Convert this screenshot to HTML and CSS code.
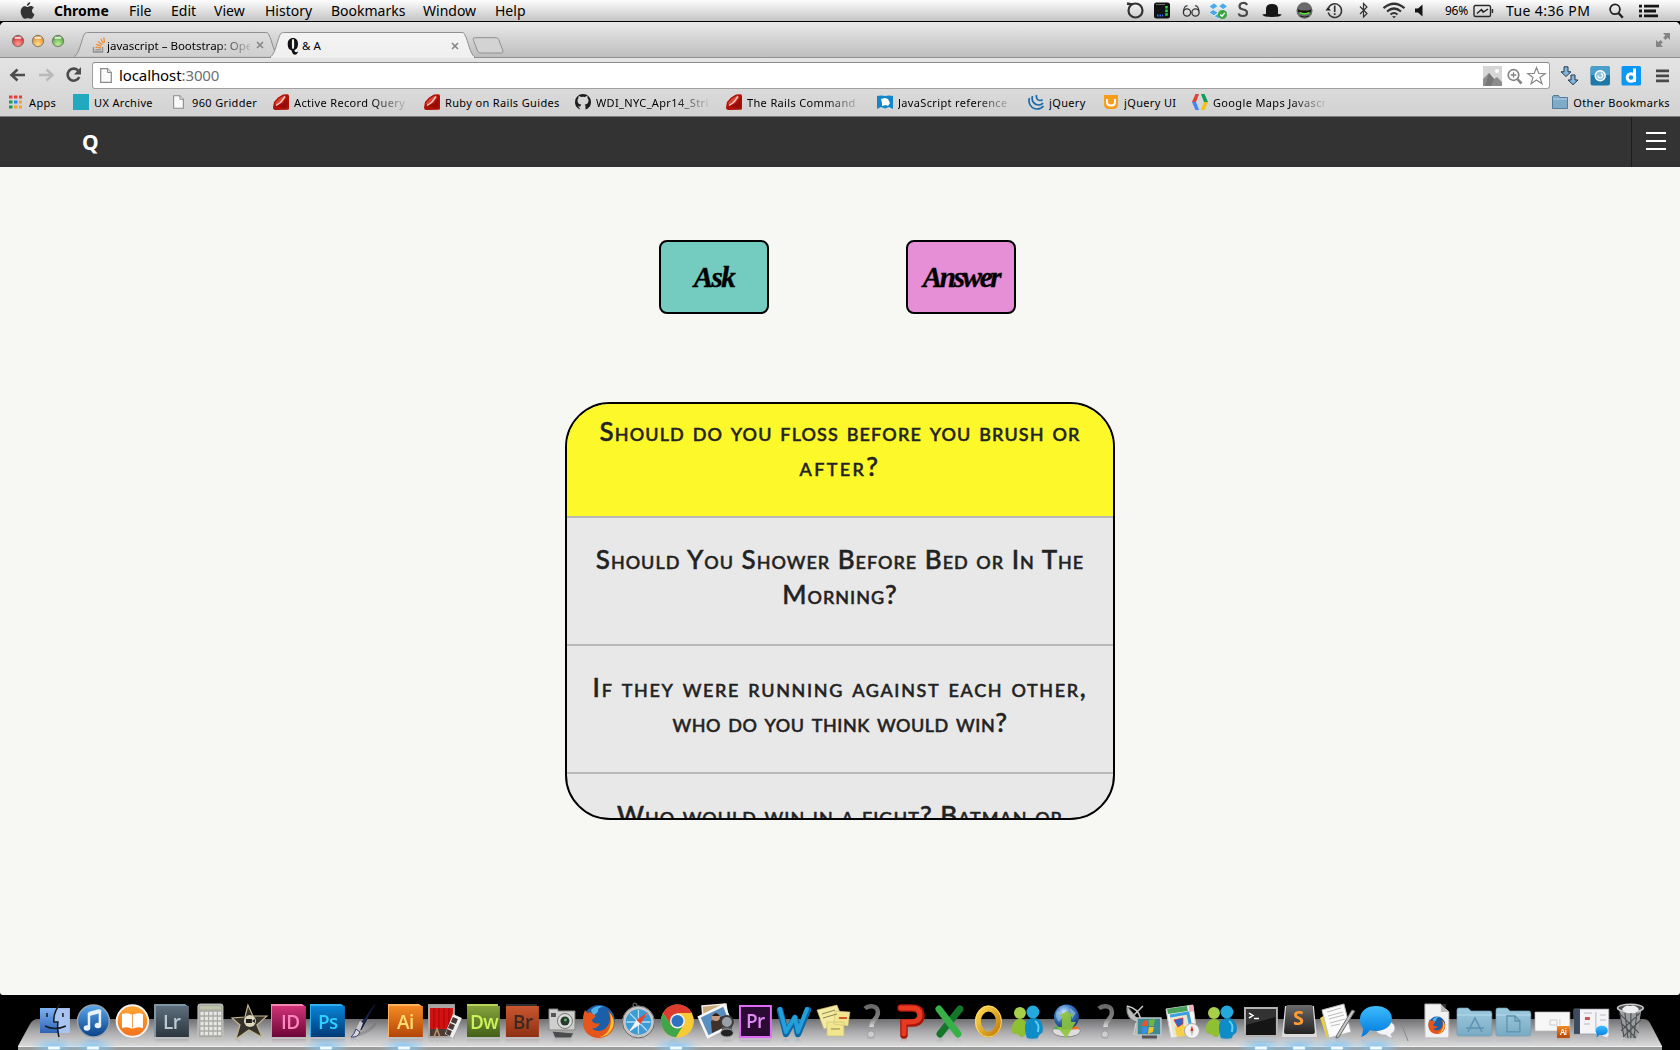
FILE: index.html
```html
<!DOCTYPE html>
<html lang="en">
<head>
<meta charset="utf-8">
<title>Q &amp; A</title>
<link rel="stylesheet" href="styles.css">
</head>
<body>
<svg class="defs" width="0" height="0">
  <defs>
    <linearGradient id="g-blue" x1="0" y1="0" x2="0" y2="1"><stop offset="0" stop-color="#5aa9ee"/><stop offset="1" stop-color="#0a3f86"/></linearGradient>
    <linearGradient id="g-ps" x1="0" y1="0" x2="0" y2="1"><stop offset="0" stop-color="#0a84d6"/><stop offset="1" stop-color="#003a78"/></linearGradient>
    <linearGradient id="g-lr" x1="0" y1="0" x2="0" y2="1"><stop offset="0" stop-color="#5d6e7c"/><stop offset="1" stop-color="#2d363e"/></linearGradient>
    <linearGradient id="g-id" x1="0" y1="0" x2="0" y2="1"><stop offset="0" stop-color="#d03378"/><stop offset="1" stop-color="#6d0537"/></linearGradient>
    <linearGradient id="g-ai" x1="0" y1="0" x2="0" y2="1"><stop offset="0" stop-color="#f58a24"/><stop offset="1" stop-color="#b34608"/></linearGradient>
    <linearGradient id="g-dw" x1="0" y1="0" x2="0" y2="1"><stop offset="0" stop-color="#85a33a"/><stop offset="1" stop-color="#43601a"/></linearGradient>
    <linearGradient id="g-br" x1="0" y1="0" x2="0" y2="1"><stop offset="0" stop-color="#c9572f"/><stop offset="1" stop-color="#8f3013"/></linearGradient>
    <linearGradient id="g-orange" x1="0" y1="0" x2="0" y2="1"><stop offset="0" stop-color="#ffa733"/><stop offset="1" stop-color="#f2711c"/></linearGradient>
    <linearGradient id="g-face" x1="0" y1="0" x2="0" y2="1"><stop offset="0" stop-color="#7db2f2"/><stop offset="1" stop-color="#2e62b4"/></linearGradient>
    <linearGradient id="g-q" x1="0" y1="0" x2="0" y2="1"><stop offset="0" stop-color="#6a6a6a"/><stop offset=".6" stop-color="#808080"/><stop offset="1" stop-color="#dcdcdc"/></linearGradient>
    <linearGradient id="g-folder" x1="0" y1="0" x2="0" y2="1"><stop offset="0" stop-color="#9fcbdf"/><stop offset="1" stop-color="#79aac3"/></linearGradient>
    <linearGradient id="g-msg" x1="0" y1="0" x2="0" y2="1"><stop offset="0" stop-color="#3dbcff"/><stop offset="1" stop-color="#0077da"/></linearGradient>
    <linearGradient id="g-dark" x1="0" y1="0" x2="0" y2="1"><stop offset="0" stop-color="#6b6b6b"/><stop offset="1" stop-color="#222"/></linearGradient>
    <linearGradient id="g-gold" x1="0" y1="0" x2="1" y2="1"><stop offset="0" stop-color="#ffd84f"/><stop offset="1" stop-color="#c17c0a"/></linearGradient>
    <linearGradient id="g-tab" x1="0" y1="0" x2="0" y2="1"><stop offset="0" stop-color="#f4f4f4"/><stop offset="1" stop-color="#efefef"/></linearGradient>
    <linearGradient id="g-tab-off" x1="0" y1="0" x2="0" y2="1"><stop offset="0" stop-color="#dedede"/><stop offset="1" stop-color="#cfcfcf"/></linearGradient>
    <linearGradient id="g-shelf" x1="0" y1="0" x2="0" y2="1"><stop offset="0" stop-color="#707072"/><stop offset=".45" stop-color="#a8a8aa"/><stop offset="1" stop-color="#dadadb"/></linearGradient>
    <radialGradient id="g-red" cx=".5" cy=".75" r=".7"><stop offset="0" stop-color="#ff9d94"/><stop offset="1" stop-color="#c92a2c"/></radialGradient>
    <radialGradient id="g-amber" cx=".5" cy=".75" r=".7"><stop offset="0" stop-color="#ffe08a"/><stop offset="1" stop-color="#d98427"/></radialGradient>
    <radialGradient id="g-green" cx=".5" cy=".75" r=".7"><stop offset="0" stop-color="#c0f09a"/><stop offset="1" stop-color="#4d9a3a"/></radialGradient>
    <radialGradient id="g-globe" cx=".4" cy=".3" r=".8"><stop offset="0" stop-color="#cfe6ff"/><stop offset=".4" stop-color="#3b7cc4"/><stop offset="1" stop-color="#0b2d66"/></radialGradient>
    <radialGradient id="g-lamp"><stop offset="0" stop-color="#7cc4f5" stop-opacity=".9"/><stop offset="1" stop-color="#8ccbf5" stop-opacity="0"/></radialGradient>
  </defs>
  <symbol id="ruby" viewBox="0 0 16 16"><path d="M0 13.500 1 8 5 3.500 10 .5 14.500.3q1.500.2 1.500 2v12q0 1.500-1.500 1.500L2 16q-2-.3-2-2.500z" fill="#b11208"/><path d="M2 9 6 4.500 11.500 1.500 13 3 9.500 8.500 3 11z" fill="#dc4638"/><path d="M3 11.500 7.500 8.500 12 2.500" stroke="#f9d0ca" stroke-width="1.300" fill="none"/><path d="M4.500 12 10.500 9.500 14.500 4v9l-3 1.500z" fill="#960d05"/></symbol>
  <symbol id="page" viewBox="0 0 12 15"><path d="M.7.7h6.800l3.800 3.800v9.800H.7z" fill="#fafafa" stroke="#8a8a8a" stroke-width="1.200"/><path d="M7.500.7v3.800h3.800" fill="#e4e4e4" stroke="#8a8a8a" stroke-width="1"/></symbol>
  <symbol id="close" viewBox="0 0 8 8"><path d="M1 1l6 6M7 1 1 7" stroke="#858585" stroke-width="1.600"/></symbol>
  <symbol id="missing" viewBox="0 0 39 40"><path d="M13 7.500C17 3.500 26 4.500 26 11.500c0 7-6.500 6-6.500 14.500" fill="none" stroke="url(#g-q)" stroke-width="4.500"/><circle cx="19" cy="33.500" r="3.600" fill="#ccc" stroke="#999"/></symbol>
  <symbol id="buddies" viewBox="0 0 39 40"><circle cx="12" cy="12" r="6" fill="#a9d04a"/><path d="M4 29c0-7 3-11 8-11s7 4 7 9c-1 8-3 9-6 9-3-2-3-4-6-3-2 0-3-2-3-4z" fill="#8fc032"/><circle cx="25" cy="11" r="6.500" fill="#25a8dc"/><path d="M17 27c0-7 4-10 9-10s9 4 9 11c0 6-4 4-5 9-4 1-7 1-11 0-1-3-2-6-2-10z" fill="#0e8cc7"/><path d="M27 20q5 3 3 11" stroke="#5fd0f4" fill="none" stroke-width="2"/></symbol>
  <symbol id="firefox" viewBox="0 0 34 34"><circle cx="17" cy="17" r="16" fill="#1b5fa8"/><path d="M9 6q6-6 13-3-7 0-6 5l-5 4z" fill="#4fb2e8"/><path d="M3 6c1 1 2 3 3 3 2-1 4 0 5 1l3 2-4 4c1 4 5 4 8 3-1 4-5 6-8 5 3 4 10 4 14 0 5-5 5-11 2-17 5 3 8 10 6 16-2 7-8 11-15 11C7 34 1 27 1 19c0-5 0-8 2-13z" fill="#e4561b"/><path d="M28 9c4 5 5 11 2 16-3 6-8 8-12 8 9-3 13-12 10-24z" fill="#ffc52e"/></symbol>
  <symbol id="bubble" viewBox="0 0 39 40"><path d="M24 19c8 0 13 4 13 8 0 3-2 5-4 6 0 1 1 3 2 4-3 0-5-1-7-3-6 0-9-2-10-5z" fill="#f2f4f8" stroke="#aab" stroke-width=".5"/><path d="M18 5c9 0 16 5 16 12.500S27 30 18 30q-3 0-6-1-3 5-9 7 2-3 2-9c-2-2-3-5-3-9C2 10 9 5 18 5z" fill="url(#g-msg)"/></symbol>
  <symbol id="lamp" viewBox="0 0 50 14"><ellipse cx="25" cy="11" rx="24" ry="11" fill="url(#g-lamp)"/><rect x="19" y="10.500" width="12" height="3" rx="1" fill="#f4fbff"/></symbol>
</svg>

<header class="menubar">
  <svg class="apple" viewBox="0 0 15 19"><path d="M10.300 0c.2 2-1.500 4-3.400 4C6.700 2.200 8.300.4 10.300 0zM7.500 5.200c.8 0 1.700-.9 3.400-.9 1.300 0 2.600.7 3.300 1.800-2.900 1.600-2.400 5.600.6 6.700C14.200 15 12.500 17.800 11 17.800c-1.200 0-1.600-.7-3.100-.7-1.500 0-2 .7-3.100.7C2.900 17.800.3 13.600.3 10.300.3 6.500 2.600 4.400 4.800 4.400c1.200 0 2.100.8 2.700.8z" fill="#333"/></svg>
  <nav class="menus">
    <b>Chrome</b><span>File</span><span>Edit</span><span>View</span><span>History</span><span>Bookmarks</span><span>Window</span><span>Help</span>
  </nav>
  <svg class="status" viewBox="1120 0 310 21" width="310" height="21">
    <g fill="none" stroke="#333" stroke-width="1.800">
      <circle cx="1135.500" cy="10.500" r="7" stroke-width="2.200"/><path d="M1127 3.500 1132 4.500" stroke-width="2.500"/>
      <circle cx="1187" cy="12.500" r="3.600" stroke-width="1.300"/><circle cx="1195.500" cy="12.500" r="3.600" stroke-width="1.300"/><path d="M1183.500 11q1-6 4-5M1199 11q-1-6-4-5" stroke-width="1.200"/>
      <path d="M1247 5q-1-2.500-4.500-2-3 .5-3 3.300 0 2.700 3.800 3.200t3.700 3.200q0 3.300-4.500 3.300-3.500 0-3.700-2.500" stroke="#4a4a4a" stroke-width="2.200"/>
      <path d="M1328.500 8a6.800 6.800 0 1 1-.3 4.500" stroke-width="1.500"/><path d="M1334.700 5.500v6.500" stroke-width="1.700"/><path d="M1334.700 13.200v1.800" stroke-width="1.700"/><path d="M1325.500 10.500h5.500l-3-3.500z" fill="#222" stroke="none"/>
      <path d="M1360 6.500l7 7-3.500 3.500V3.500l3.500 3.500-7 7" stroke-width="1.200"/>
      <path d="M1383.500 8.200q10.500-9 21 0" stroke-width="2.300"/><path d="M1387 11.500q7-6 14 0" stroke-width="2.200"/><path d="M1390.500 14.500q3.500-3 7 0" stroke-width="2"/>
    </g>
    <path d="M1392 16.200h4l-2 2z" fill="#222"/>
    <rect x="1154" y="2.500" width="16" height="16" rx="2.500" fill="#101214"/><path d="M1166.500 6v2.600m0 1v2.600m0 1v2.600" stroke="#27d64e" stroke-width="2.500"/><path d="M1157 15.500h6" stroke="#2a6ff0" stroke-width="2" stroke-dasharray="1.500 1"/><path d="M1156 4.500h9" stroke="#666"/>
    <g fill="#4aa9ea" stroke="#fff" stroke-width=".6"><path d="M1209 6.500l5-3.500 4 3.200-4.800 3.300zM1218.700 6.200l4.300-3.200 4.500 3.500-4.200 3zM1209 12.500l4.200-3 5 3.200-4.200 3.200zM1218.500 12.700l4.800-3.200 4.200 3-4.500 3.200zM1213.500 16.200l5-3 4.500 3-4.500 2.500z"/></g><circle cx="1222.500" cy="14.500" r="4.500" fill="#3aa53c"/><path d="M1220.300 14.500l1.700 1.700 2.800-3.300" stroke="#fff" stroke-width="1.300" fill="none"/>
    <path d="M1266 14V9q0-5 6-5t6 5v5l3.800.5q-1 2.500-9.800 2.500t-9.800-2.500z" fill="#161616"/>
    <ellipse cx="1304.500" cy="10.500" rx="8" ry="8.300" fill="#6a6a6a"/><path d="M1297.500 9q3 2 5.500 1.500h3q3 .5 5.500-1.500l-1 3.500q-5.500 3-12 0z" fill="#111"/><path d="M1299.500 12.500q5 2.500 10 0" stroke="#5be33e" stroke-width="1.400" fill="none"/><path d="M1300 16q4.500 2 9 0" stroke="#222" fill="none"/>
    <path d="M1415 8.500h3l4.500-4v12l-4.500-4h-3z" fill="#151515"/>
  </svg>
  <span class="percent">96%</span>
  <svg class="battery" viewBox="0 0 21 14" width="21" height="14"><path d="M4 1.500H2.500q-1.500 0-1.500 1.500v8q0 1.500 1.500 1.500H16q1.500 0 1.500-1.500V3q0-1.500-1.500-1.500H4M19.500 5v4" fill="none" stroke="#2a2a2a" stroke-width="1.400"/><path d="M4 9.500 8.500 5.500 10.500 8 15 5M10.500 8.500 8.500 6" fill="none" stroke="#222" stroke-width="1.500"/></svg>
  <span class="clock">Tue 4:36 PM</span>
  <svg class="search" viewBox="0 0 15 16" width="15" height="16"><circle cx="6" cy="6.300" r="4.900" fill="none" stroke="#222" stroke-width="1.800"/><path d="M9.500 10l4.300 4.700" stroke="#222" stroke-width="2.400"/></svg>
  <svg class="list" viewBox="0 0 20 14" width="20" height="14"><path d="M0 2.200h3M0 7h3M0 11.800h3M5 2.200h15M5 7h12M5 11.800h14" stroke="#151515" stroke-width="2.800"/></svg>
</header>

<section class="chrome">
  <div class="tabstrip">
    <svg class="lights" viewBox="0 0 54 14" width="54" height="14"><g stroke="#555" stroke-opacity=".6"><circle cx="7" cy="7" r="5.700" fill="url(#g-red)"/><circle cx="27" cy="7" r="5.700" fill="url(#g-amber)"/><circle cx="47" cy="7" r="5.700" fill="url(#g-green)"/></g><path d="M4.500 3.800h5M24.500 3.800h5M44.500 3.800h5" stroke="#fff" stroke-opacity=".8" stroke-width="2" stroke-linecap="round"/></svg>
    <div class="tab">
      <svg class="tab-shape" viewBox="0 0 205 25" width="205" height="25"><path d="M0 24.500C5 24 8 5 10.500 2 11.500.5 13 .5 15 .5h175c3 0 4 0 5 2.500C198 8 200 23 205 24.500" fill="url(#g-tab-off)" stroke="#8f8f8f"/></svg>
      <svg class="fav" viewBox="0 0 14 16" width="14" height="16"><path d="M1.500 10v5h9v-5" fill="none" stroke="#8d8f91" stroke-width="1.400"/><path d="M3.300 12.800h5.500" stroke="#8d8f91" stroke-width="1.300"/><path d="M3.500 10.200l5.400.8M4.200 7.300l5 1.800M6 4.500l4.200 3.200M8.800 2l2.700 4.500M11.800.5l.8 5" stroke="#f08b35" stroke-width="1.300"/></svg>
      <span class="tab-title fade">javascript – Bootstrap: Ope</span>
      <svg class="x" width="8" height="8"><use href="#close"/></svg>
    </div>
    <div class="tab active">
      <svg class="tab-shape" viewBox="0 0 205 26" width="205" height="26"><path d="M0 25C5 24 8 5 10.500 2 11.500.5 13 .5 15 .5h175c3 0 4 0 5 2.500C198 8 200 23 205 25" fill="url(#g-tab)" stroke="#8f8f8f"/><path d="M1 25.500h203" stroke="#efefef" stroke-width="2"/></svg>
      <svg class="fav q" viewBox="0 0 12 17" width="12" height="17"><path fill-rule="evenodd" d="M6 0c3.300 0 5 2.500 5 6s-1.500 5.500-3.500 6c0 2 1 2.800 3.500 1.600-.2 2-1.500 3.200-3 3.200-2.500 0-2.500-2.300-3.800-4.700C1.800 11.500.7 9.500.7 6 .7 2.500 2.700 0 6 0zm0 1C4.800 1 4.900 3 4.900 6s0 5 1.100 5 1.200-2 1.200-5S7.200 1 6 1z" fill="#111"/></svg>
      <span class="tab-title">&amp; A</span>
      <svg class="x" width="8" height="8"><use href="#close"/></svg>
    </div>
    <svg class="newtab" viewBox="0 0 32 17" width="32" height="17"><path d="M3 .7h20c3 0 3.500 1 4.200 3l3.500 9.500c.6 2 .2 2.800-2 2.800H9c-2.500 0-3-.8-3.800-3L1.500 3.500C.8 1.500 1 .7 3 .7z" fill="#d3d3d3" stroke="#8f8f8f"/></svg>
    <svg class="expand" viewBox="0 0 14 14" width="14" height="14"><path d="M7 0h7v7l-2.300-2.300-2.200 2.200-2.300-2.300 2.200-2.200zM0 7l2.300 2.300L4.500 7l2.300 2.300-2.200 2.200L7 14H0z" fill="#858585"/></svg>
  </div>
  <div class="toolbar">
    <svg class="nav-icons" viewBox="0 0 74 20" width="74" height="20"><path d="M17 10H4M9.500 4.500 3.500 10l6 5.500" fill="none" stroke="#4c4c4c" stroke-width="2.600"/><path d="M31 10h13M38.500 4.500l6 5.500-6 5.500" fill="none" stroke="#b9b9b9" stroke-width="2.400"/><path d="M70 5.500a6 6 0 1 0 1.200 6.500" fill="none" stroke="#4c4c4c" stroke-width="2.600"/><path d="M73 2v7.500h-7z" fill="#4c4c4c"/></svg>
    <div class="omnibox">
      <svg class="doc" width="12" height="15"><use href="#page"/></svg>
      <span class="url">localhost<i>:3000</i></span>
      <svg class="omni-icons" viewBox="0 0 64 20" width="64" height="20"><path d="M0 0h19v20H0z" fill="#d6d6d6"/><circle cx="14" cy="5" r="2" fill="#fff"/><path d="M0 20v-7l6-6 5 6 3-2 5 5v4z" fill="#8c8c8c"/><path d="M6 7l5 6-3 7H2z" fill="#777"/><circle cx="30.500" cy="9" r="5.300" fill="none" stroke="#858585" stroke-width="1.700"/><path d="M34.500 13.200l4 4.300" stroke="#858585" stroke-width="2.600"/><path d="M27.700 9h5.600M30.500 6.200v5.600" stroke="#858585" stroke-width="1.300"/><path d="M53.500 1.500l2.300 6h6.400l-5.200 4 2 6.300-5.500-3.800-5.500 3.800 2-6.300-5.200-4h6.400z" fill="#fff" stroke="#888" stroke-width="1.200"/></svg>
    </div>
    <svg class="ext" viewBox="0 0 110 20" width="110" height="20"><path d="M4 .8h4v5h3L6 10.500 1 5.800h3zM11 9h4v5h3l-5 4.700L8 14h3z" fill="#86b6da" stroke="#203a52"/><rect x="30.500" y="0" width="19.500" height="19.500" rx="2.500" fill="#1e79a8"/><path d="M30.500 2.500Q30.500 0 33 0h14.500q2.500 0 2.500 2.500V9H30.500z" fill="#4ba0cb"/><circle cx="40.200" cy="9.800" r="5" fill="#8fc4de" stroke="#fff" stroke-width="1.400"/><path d="M38 9.500a2.300 2.300 0 1 0 3-2" fill="none" stroke="#fff" stroke-width="1.200"/><rect x="61.500" y="0" width="19.500" height="19.500" rx="1.500" fill="#0b97f5"/><circle cx="71" cy="11.500" r="3.800" fill="none" stroke="#fff" stroke-width="3"/><path d="M74.500 2.500v13.500" stroke="#fff" stroke-width="3"/><path d="M96 4.800h13M96 9.800h13M96 14.800h13" stroke="#484848" stroke-width="2.800"/></svg>
  </div>
  <div class="bookmarks">
    <a class="bm w-apps"><svg viewBox="0 0 16 16"><path d="M1 3h13" stroke="#e33e3c" stroke-width="3" stroke-dasharray="3.500 1.500"/><path d="M1 8h3.500" stroke="#169b5b" stroke-width="3"/><path d="M6 8h3.500" stroke="#2f86e8" stroke-width="3"/><path d="M11 8h3M6 13h3.500M11 13h3" stroke="#f2a22d" stroke-width="3"/><path d="M1 13h3.500" stroke="#169b5b" stroke-width="3"/></svg><span>Apps</span></a>
    <a class="bm w-ux"><svg viewBox="0 0 16 16"><path d="M0 0h16v16H0z" fill="#21a9bf"/></svg><span>UX Archive</span></a>
    <a class="bm w-grid"><svg viewBox="0 0 16 16"><use href="#page" x="2" y="1" width="11" height="14"/></svg><span>960 Gridder</span></a>
    <a class="bm w-std"><svg><use href="#ruby"/></svg><span class="fade">Active Record Query</span></a>
    <a class="bm w-std"><svg><use href="#ruby"/></svg><span>Ruby on Rails Guides</span></a>
    <a class="bm w-std"><svg viewBox="0 0 16 16"><path d="M5.500 15.500v-3q-2.500.5-3.500-1.500M5.500 15.500C2 14.500 0 11.500 0 8a8 8 0 0 1 16 0c0 3.500-2 6.500-5.500 7.500v-3c0-1-.3-1.500-.8-2 2.300-.3 3.800-1.200 3.800-4 0-1-.3-1.800-1-2.500.1-.5.1-1.200-.1-2-.8 0-1.600.4-2.400.9a8 8 0 0 0-4 0C5.200 2.400 4.400 2 3.600 2c-.2.800-.2 1.500-.1 2-.7.700-1 1.500-1 2.500 0 2.800 1.500 3.700 3.800 4-.5.400-.8 1-.8 2z" fill="#1c1c1c"/></svg><span class="fade">WDI_NYC_Apr14_Stri</span></a>
    <a class="bm w-std"><svg><use href="#ruby"/></svg><span class="fade">The Rails Command</span></a>
    <a class="bm w-std"><svg viewBox="0 0 16 16"><path d="M0 2q4-1 8 0 4-1 8 0v13l-4-2-4 1.500L4 13l-4 2z" fill="#1386c8"/><path d="M4 5l4-1 3 1 2 4-2 3-2-1-4 1V9z" fill="#fff"/></svg><span class="fade">JavaScript reference</span></a>
    <a class="bm w-jq"><svg viewBox="0 0 16 16"><path d="M1.500 4c-2 5 2 11 7.500 11 3 0 5-1 6.500-3M4.500 2c-1.500 5 2 9 6 9 2 0 3.500-.5 4.500-2M8.500 1c-.5 3 1 5.500 3.500 5.500 1 0 2-.3 2.500-1" fill="none" stroke="#1769ad" stroke-width="1.700"/></svg><span>jQuery</span></a>
    <a class="bm w-jqui"><svg viewBox="0 0 16 16"><path d="M1 1h14v9q0 5-5 5H6q-5 0-5-5z" fill="#f89c1c"/><path d="M4 5v3q0 3.500 4 3.500t4-3.500V5" fill="none" stroke="#fff" stroke-width="2"/></svg><span>jQuery UI</span></a>
    <a class="bm w-maps"><svg viewBox="0 0 16 16"><path d="M3.500 0H7L4 8H0z" fill="#db4437"/><path d="M0 8h4l3 8H3.500z" fill="#4285f4"/><path d="M9 0h3.500L16 8h-4z" fill="#0f9d58"/><path d="M12 8h4l-3.500 8H9z" fill="#f4c20d"/></svg><span class="fade">Google Maps Javascr</span></a>
    <a class="bm other"><svg viewBox="0 0 16 16"><path d="M.5 14.500v-12l1-1h5l1 2h8v11z" fill="#7fabc8" stroke="#4f7d9c"/><path d="M1 5h14" stroke="#b9d5e6"/></svg><span>Other Bookmarks</span></a>
  </div>
</section>

<div class="navbar">
  <a class="brand">Q</a>
  <button class="toggle"><i></i><i></i><i></i></button>
</div>

<main class="page">
  <div class="actions">
    <button class="btn ask">Ask</button>
    <button class="btn answer">Answer</button>
  </div>
  <ul class="questions">
    <li class="current"><span>Should do you floss before you brush or</span><br><span class="airy">after?</span></li>
    <li><span class="snug">Should You Shower Before Bed or In The</span><br><span class="snug">Morning?</span></li>
    <li><span class="wide">If they were running against each other,</span><br><span class="tight">who do you think would win?</span></li>
    <li><span class="snug">Who would win in a fight? Batman or</span></li>
  </ul>
</main>

<footer class="dock">
  <svg class="shelf" viewBox="0 0 1680 55" width="1680" height="55">
    <path d="M38 24h1605q5 0 7 4l12 23H18l12-22q3-5 8-5z" fill="url(#g-shelf)"/><path d="M18 51h1644v4H18z" fill="#9b9d9c"/><path d="M18 51.500h1644" stroke="#efefef"/><path d="M1401 28l7 18" stroke="#888"/>
    <g><use href="#lamp" x="29" y="41" width="50" height="14"/><use href="#lamp" x="68" y="41" width="50" height="14"/><use href="#lamp" x="301" y="41" width="50" height="14"/><use href="#lamp" x="379" y="41" width="50" height="14"/><use href="#lamp" x="651" y="41" width="50" height="14"/><use href="#lamp" x="1236" y="41" width="50" height="14"/><use href="#lamp" x="1274" y="41" width="50" height="14"/><use href="#lamp" x="1312" y="41" width="50" height="14"/><use href="#lamp" x="1351" y="41" width="50" height="14"/></g>
  </svg>
  <div class="apps">
    <svg viewBox="0 0 39 40"><path d="M4 7h30v25H4z" fill="#a9c4f0"/><path d="M4 7h17q-3 8-3 14h4q0 6 1 11H4z" fill="url(#g-face)"/><path d="M24 3q-7 9-6 18h4q-1 7 1 15M11 12v4M27 12v4M9 25q10 5 21 0" fill="none" stroke="#161b26" stroke-width="1.500"/></svg>
    <svg viewBox="0 0 39 40"><circle cx="19.500" cy="20" r="16" fill="url(#g-blue)" stroke="#9aa5ae" stroke-width="1.500"/><path d="M15 27V13l11-3v14" fill="none" stroke="#e8f2fb" stroke-width="2.500"/><path d="M15 13l11-3" stroke="#e8f2fb" stroke-width="4"/><ellipse cx="13" cy="27" rx="3.300" ry="2.800" fill="#e8f2fb"/><ellipse cx="24" cy="24.500" rx="3.300" ry="2.800" fill="#e8f2fb"/></svg>
    <svg viewBox="0 0 39 40"><circle cx="19.500" cy="20" r="15.800" fill="url(#g-orange)" stroke="#f4f4f4" stroke-width="2"/><path d="M9 13q6-2 10.500 1Q24 11 30 13v14q-6-2-10.500 1Q15 25 9 27z" fill="#fff"/><path d="M19.500 14v14" stroke="#f2a35a"/></svg>
    <svg viewBox="0 0 39 40"><path d="M2 3h31l3 2v31H2z" fill="#8196a5"/><path d="M4 5h33v31H4z" fill="url(#g-lr)"/><text x="11" y="28" class="ic" fill="#b8cad6">Lr</text></svg>
    <svg viewBox="0 0 39 40"><rect x="7" y="3" width="25" height="34" rx="2" fill="#a9a9a5" stroke="#c9c9c6"/><path d="M9 5h21v3.500H9z" fill="#bcc5a6"/><path d="M9.500 12.500h21M9.500 17.500h21M9.500 22.500h21M9.500 27.500h21M9.500 32.500h21" stroke="#e6e6e4" stroke-width="3.500" stroke-dasharray="3.200 1.200"/></svg>
    <svg viewBox="0 0 39 40"><path d="M18 4l5 11 14 0-10 9 5 12-13-7-13 9 4-14L2 17l13-1z" fill="#35322c" stroke="#c3b68d" stroke-width="1.200"/><circle cx="20" cy="20" r="6" fill="#dcd6bd"/><path d="M16 18h6v4h-6zM22 20l3-2v4z" fill="#222"/></svg>
    <svg viewBox="0 0 39 40"><path d="M2 3h31l3 2v31H2z" fill="#f285b1"/><path d="M3 5h34v31H3z" fill="url(#g-id)"/><text x="12" y="28" class="ic" fill="#ff87bd">ID</text></svg>
    <svg viewBox="0 0 39 40"><path d="M2 3h31l3 2v31H2z" fill="#2fb0f2"/><path d="M3 5h34v31H3z" fill="url(#g-ps)"/><text x="10" y="28" class="ic" fill="#2fd0ff">Ps</text></svg>
    <svg viewBox="0 0 39 40"><path d="M11 34q13-4 18-12" stroke="#666" stroke-width="3" opacity=".35" fill="none"/><path d="M28 3 14 29l-3-2z" fill="#1f2f57" stroke="#0c1430"/><path d="M16 22l-3 8-4-2 4-8z" fill="#c9c9c9"/><path d="M9 28l4 3q-2 6-9 5 3-2 5-8z" fill="#d8d8dc" stroke="#333a6b"/></svg>
    <svg viewBox="0 0 39 40"><path d="M2 3h31l3 2v31H2z" fill="#ffb25e"/><path d="M3 5h34v31H3z" fill="url(#g-ai)"/><text x="11" y="28" class="ic" fill="#ffdf70">Ai</text></svg>
    <svg viewBox="0 0 39 40"><path d="M4 3h27v34H4z" fill="#a9a5a2"/><path d="M6 7h23v21H6z" fill="#d41111"/><path d="M10 7v20M15 7v20M20 7v20M25 7v20" stroke="#a80a0a" stroke-width="1.200"/><path d="M6 28h23v7H6z" fill="#4b3b35"/><path d="M10 36l3-8 3 8" stroke="#c0926a" fill="none" stroke-width="1.500"/><path d="M29 13l9 4-9 20-8-4z" fill="#eee"/><path d="M29 16l5 2-2 5-5-2zM26 22l5 2-2 5-5-2zM23 28l5 2-2 5-4-2z" fill="#463a36"/></svg>
    <svg viewBox="0 0 39 40"><path d="M4 3h31v33H4z" fill="#b7d657"/><path d="M4 5h33v31H4z" fill="url(#g-dw)"/><text x="7" y="28" class="ic" fill="#cdf25a">Dw</text></svg>
    <svg viewBox="0 0 39 40"><path d="M4 3h31v33H4z" fill="#2e2f31"/><path d="M4 5h33v31H4z" fill="url(#g-br)"/><text x="11" y="28" class="ic" fill="#3c2a22">Br</text></svg>
    <svg viewBox="0 0 39 40"><path d="M8 8h9v2h17v19H8z" fill="#cfcfcd" stroke="#888"/><circle cx="24" cy="20" r="7.500" fill="#dcdcdc" stroke="#777"/><circle cx="24" cy="20" r="4.500" fill="#253a2a"/><circle cx="24.500" cy="19" r="1.500" fill="#5fae68"/><path d="M10 12h5v4h-5z" fill="#555"/><path d="M11 30l22 2-3 5H14z" fill="#4a4c4c" stroke="#aaa"/></svg>
    <svg viewBox="0 0 39 40"><use href="#firefox" x="2" y="3" width="34" height="34"/></svg>
    <svg viewBox="0 0 39 40"><circle cx="16" cy="4" r="2" fill="none" stroke="#777"/><circle cx="19.500" cy="21" r="14.500" fill="#3d9bd6" stroke="#c7c7c7" stroke-width="3.500"/><circle cx="19.500" cy="21" r="16" fill="none" stroke="#666"/><path d="M19.500 9v24M7.500 21h24M11 12.500l17 17M28 12.500l-17 17" stroke="#b6def5" stroke-width="1.300"/><path d="M29 11 21.500 23l-4-4z" fill="#e2462c"/><path d="M10 31l7.500-12 4 4z" fill="#f3f3f3"/></svg>
    <svg viewBox="0 0 39 40"><circle cx="19.500" cy="20" r="16.500" fill="#f7cb35"/><path d="M5 12a16.500 16.500 0 0 1 29 0H19.500L13 24z" fill="#dd3b30"/><path d="M5 12a16.500 16.500 0 0 0 13 24.400L25.500 24 13 24z" fill="#3fa54a"/><circle cx="19.500" cy="20" r="7.500" fill="#f4f4f4"/><circle cx="19.500" cy="20" r="6" fill="#2f73c0"/></svg>
    <svg viewBox="0 0 39 40"><path d="M5 5l24-2 2 14H6z" fill="#c7ab7d" stroke="#f2eee6" stroke-width="1.500"/><path d="M2 16 27 4l8 20-24 12z" fill="#5a8fc2" stroke="#f6f6f6" stroke-width="2.500"/><path d="M14 20l12-5 4 10-15 7z" fill="#40312b"/><circle cx="19" cy="16" r="4" fill="#c59a7c"/><path d="M15 15q4-6 8 0" fill="#222"/><circle cx="30" cy="21" r="6" fill="#9aa0a6" stroke="#3a3a3a" stroke-width="2"/><path d="M25 26h10v6H25z" fill="#555"/><ellipse cx="30" cy="32" rx="6.500" ry="4" fill="#222" stroke="#aaa"/></svg>
    <svg viewBox="0 0 39 40"><path d="M4 5h31v31H4z" fill="#2b0b33" stroke="#df6cf5" stroke-width="2"/><text x="10" y="27" class="ic" fill="#e28af7">Pr</text></svg>
    <svg viewBox="0 0 39 40"><path d="M6 9l6 24 9-16 3 16L34 9" fill="none" stroke="#0a69a8" stroke-width="6.500" stroke-linejoin="round" stroke-linecap="round"/><path d="M6 8l6 23 9-15 3 15L33 8" fill="none" stroke="#249fd9" stroke-width="4" stroke-linejoin="round" stroke-linecap="round"/></svg>
    <svg viewBox="0 0 39 40"><path d="M4 9 24 4l7 17-20 7z" fill="#f4eaa0" stroke="#c9bf76" stroke-width=".6"/><path d="M22 10l15 1-2 14-14-2zM14 21h17v14H14z" fill="#f1e58d" stroke="#c9bf76" stroke-width=".6"/><path d="M9 13l13-4M10 17l14-4M18 28h9" stroke="#8b8452"/><path d="M26 17h8" stroke="#d8542c" stroke-width="2"/></svg>
    <svg viewBox="0 0 39 40"><use href="#missing"/></svg>
    <svg viewBox="0 0 39 40"><path d="M10 7h11q9 0 9 8t-12 7l-5 0v12" fill="none" stroke="#a8170b" stroke-width="7.500" stroke-linecap="round"/><path d="M10 7h11q8 0 8 7t-11 7h-5v12" fill="none" stroke="#e83a20" stroke-width="5" stroke-linecap="round"/></svg>
    <svg viewBox="0 0 39 40"><path d="M30 8 10 33" stroke="#14752b" stroke-width="7" stroke-linecap="round"/><path d="M9 8l19 25" stroke="#36b047" stroke-width="7" stroke-linecap="round"/></svg>
    <svg viewBox="0 0 39 40"><ellipse cx="19.500" cy="20.500" rx="10.500" ry="13" fill="none" stroke="url(#g-gold)" stroke-width="6"/><ellipse cx="19.500" cy="20.500" rx="13" ry="15.500" fill="none" stroke="#ffdc64"/></svg>
    <svg viewBox="0 0 39 40"><use href="#buddies"/></svg>
    <svg viewBox="0 0 39 40"><ellipse cx="19.500" cy="30" rx="14" ry="6" fill="#ddd" stroke="#888"/><path d="M6 28q4-4 9-4l3 5z" fill="#4aa84a"/><path d="M33 28q-4-4-9-4l-3 5z" fill="#e8742c"/><circle cx="19.500" cy="16" r="12.500" fill="url(#g-globe)"/><path d="M10 10q6 1 6 6l-4 5q-5-5-2-11zM23 7l6 5-4 6z" fill="#a9c8de" opacity=".6"/><path d="M15 21v-6h-3l8-5 7 5h-3v6h5L19.500 37 10 26h5z" fill="#8ec43c" opacity=".9"/></svg>
    <svg viewBox="0 0 39 40"><use href="#missing"/></svg>
    <svg viewBox="0 0 39 40"><path d="M3 5q-2 15 14 17z" fill="#b9bdbf" stroke="#777"/><path d="M3 5q14 3 14 17M10 14l9-9M12 22l-2 11h8" stroke="#ccc" stroke-width="1.500" fill="none"/><path d="M13 17h24v17H13z" fill="#3b8a94" stroke="#bfc5c8" stroke-width="1.500"/><path d="M19 20l5-1v6h-6z" fill="#e2582e"/><path d="M25 19l6-1-1 7h-5z" fill="#6fb73c"/><path d="M18 26h6l-1 6-5 1z" fill="#3c8ee0"/><path d="M25 26h5l-1 5-5 2z" fill="#f2c327"/><path d="M18 36h15" stroke="#555" stroke-width="3"/></svg>
    <svg viewBox="0 0 39 40"><path d="M3 8 30 4l4 28-26 5z" fill="#f4f4f0" stroke="#ccc"/><path d="M4 8l20-3 1 5-20 3z" fill="#4aa35b"/><path d="M26 5l4-1 1 6-5 1z" fill="#f2b3bd"/><path d="M7 14l18-3 4 20-19 4z" fill="#e8e4d2"/><path d="M7 15l18-3 4 20" fill="none" stroke="#3d9fe0" stroke-width="3"/><path d="M12 26l8-3 8 11-14 2z" fill="#f3cf4a"/><path d="M11 19l9-2v6l-5 3z" fill="#2d66c9" stroke="#d33" stroke-width=".8"/><circle cx="29" cy="30" r="7.500" fill="#f2f2f2" stroke="#aaa"/><path d="M29 24.500l1.500 5.500h-3z" fill="#d22"/><path d="M29 35.500l1.500-5.500h-3z" fill="#bbb"/></svg>
    <svg viewBox="0 0 39 40"><use href="#buddies"/></svg>
    <svg viewBox="0 0 39 40"><path d="M4 7h32v28H4z" fill="#151515" stroke="#b4b4b4" stroke-width="2"/><path d="M5 8h30v8L5 24z" fill="#333"/><path d="M8 12l4 2.500L8 17M13 17.500h5" fill="none" stroke="#fff" stroke-width="1.500"/></svg>
    <svg viewBox="0 0 39 40"><path d="M5 5h29l3 31H2z" fill="#ddd"/><path d="M6 6q0-2 2-2h23q2 0 2 2l2 25q0 2-2 2H6q-2 0-2-2z" fill="url(#g-dark)"/><text x="13" y="24" class="ic sub" fill="#ff9b32">S</text></svg>
    <svg viewBox="0 0 39 40"><path d="M1 17l5-3 8 22-6 1z" fill="#e9cf3b"/><path d="M3 9 25 3l7 28-22 6z" fill="#fafafa" stroke="#bbb"/><path d="M8 11l14-4M9 15l15-4M10 18l15-4M11 22l15-4M12 25l9-2" stroke="#aaa" stroke-width=".8"/><path d="M36 10 20 36l-3 1 1-3 15-25z" fill="#c4c6c9" stroke="#666"/></svg>
    <svg viewBox="0 0 39 40"><use href="#bubble"/></svg>
  </div>
  <div class="docs">
    <svg viewBox="0 0 39 40"><path d="M8 3h16l8 8v26H8z" fill="#f2f2f2" stroke="#bbb"/><path d="M24 3v8h8z" fill="#bbb"/><path d="M24 3h5v5z" fill="#333"/><use href="#firefox" x="11" y="15" width="18" height="18"/></svg>
    <svg viewBox="0 0 39 40"><path d="M2 33V9q0-2 2-2h9l3 3h19q2 0 2 2v21q0 2-2 2H4q-2 0-2-2z" fill="url(#g-folder)" stroke="#6f9fb8" stroke-width=".7"/><path d="M2 14h35" stroke="#b7dcea"/><path d="M13 31l7-14 7 14M11 27h18" fill="none" stroke="#5b93b1" stroke-width="1.500"/></svg>
    <svg viewBox="0 0 39 40"><path d="M2 33V9q0-2 2-2h9l3 3h19q2 0 2 2v21q0 2-2 2H4q-2 0-2-2z" fill="url(#g-folder)" stroke="#6f9fb8" stroke-width=".7"/><path d="M2 14h35" stroke="#b7dcea"/><path d="M13 15h8l5 5v11H13zM21 15v5h5" fill="none" stroke="#5b93b1" stroke-width="1.300"/></svg>
    <svg viewBox="0 0 39 40"><path d="M2 11h35v19H2z" fill="#f7f7f7" stroke="#bbb" stroke-width=".7"/><path d="M17 19h7v5h-7zM27 18v6" fill="none" stroke="#ccc"/><path d="M24 25h13v12H24z" fill="url(#g-ai)"/><text x="27" y="34.500" class="ic tiny" fill="#fff">Ai</text></svg>
    <svg viewBox="0 0 39 40"><path d="M2 8h35v25H2z" fill="#f4f4f6" stroke="#99a" stroke-width=".7"/><path d="M2 8h6v25H2z" fill="#3d4a5f"/><path d="M12 12h8M12 23h6M24 11v20M28 14h6M28 19h6" stroke="#b5b5bd"/><path d="M13 16h5v3h-5z" fill="#c55"/><use href="#bubble" x="23" y="23" width="15" height="15"/></svg>
    <svg viewBox="0 0 39 40"><path d="M8 6l4 30q7 3 14 0l5-30z" fill="#9a9d9f"/><path d="M9 12l4 24M14 12l3 25M20 12v25M26 12l-3 25M10 30 29 12M12 36 30 19M28 32 9 13M25 37 10 22" stroke="#4c4f51" stroke-width="1.100"/><ellipse cx="19.500" cy="7" rx="13" ry="3.800" fill="#4e5254" stroke="#ccc" stroke-width="1.500"/><path d="M11 8q4-5 8-3 5-2 9 3-2 5-8 4-6 1-9-4z" fill="#efefef"/></svg>
  </div>
</footer>
</body>
</html>
```

FILE: styles.css
```css
* { box-sizing: border-box; }
body {
  margin: 0;
  width: 1680px;
  height: 1050px;
  overflow: hidden;
  display: flex;
  flex-direction: column;
  background: #000;
  font-family: "Noto Sans", "Open Sans", sans-serif;
  color: #000;
}
svg { display: block; flex: none; }
.defs { position: absolute; }

/* system menu bar */
.menubar {
  height: 22px;
  flex: none;
  display: flex;
  align-items: center;
  background: linear-gradient(#fdfdfd, #c4c4c4);
  border-bottom: 1px solid #000;
  font-size: 14px;
  line-height: 21px;
  white-space: nowrap;
}
.apple { width: 15px; height: 18px; margin-left: 20px; }
.menus { display: grid; grid-template-columns: 75px 42px 43px 51px 66px 92px 72px 61px; margin-left: 19px; width: 502px; }
.status { margin-left: 564px; }
.percent { width: 28px; margin-left: 15px; font-size: 12px; letter-spacing: -.3px; }
.clock { width: 88px; margin-left: 12px; letter-spacing: .4px; }
.search { margin-left: 15px; }
.list { margin-left: 15px; }

/* browser window */
.chrome { flex: none; height: 95px; border-bottom: 1px solid #7e7e7e; border-radius: 5px 5px 0 0; overflow: hidden; background: linear-gradient(#efefef, #d2d2d2); }
.tabstrip { height: 36px; display: flex; align-items: flex-end; padding-left: 11px; background: linear-gradient(#e9e9e9, #bebebe); border-bottom: 1px solid #8f8f8f; }
.lights { margin-bottom: 9px; }
.tab { position: relative; width: 205px; height: 25px; display: flex; align-items: center; margin-left: 9px; padding: 1px 0 0 18px; }
.tab.active { margin-left: -9px; height: 26px; margin-bottom: -1px; padding-left: 17px; }
.tab-shape { position: absolute; left: 0; top: 0; }
.tab .fav, .tab .x, .tab-title { position: relative; }
.tab .q { margin-top: 2px; }
.tab-title { width: 143px; margin-left: 1px; font-size: 11.5px; white-space: nowrap; overflow: hidden; }
.tab .x { margin-left: 6px; }
.active .tab-title { width: 143px; margin-left: 3px; }
.newtab { margin: 0 0 3px -3px; }
.expand { margin: 0 10px 10px auto; }
.fade { -webkit-mask-image: linear-gradient(90deg, #000 calc(100% - 34px), rgba(0,0,0,.12)); mask-image: linear-gradient(90deg, #000 calc(100% - 34px), rgba(0,0,0,.12)); }

.toolbar { height: 32px; padding-top: 4px; display: flex; }
.nav-icons { margin: 3px 0 0 8px; }
.omnibox { width: 1458px; height: 27px; margin-left: 10px; display: flex; align-items: center; background: #fff; border: 1px solid #a0a0a0; border-top-color: #8b8b8b; border-radius: 3px; }
.doc { margin-left: 7px; }
.url { margin-left: 7px; padding-bottom: 2px; font-size: 15px; letter-spacing: -.1px; }
.url i { font-style: normal; color: #707070; }
.omni-icons { margin: 0 2px 0 auto; }
.ext { margin: 4px 0 0 10px; }

.bookmarks { height: 26px; display: flex; align-items: center; padding: 0 0 2px 8px; font-size: 11px; letter-spacing: .35px; white-space: nowrap; }
.bm { display: flex; align-items: center; gap: 5px; flex: none; }
.bm svg { width: 16px; height: 16px; }
.bm span { overflow: hidden; max-width: 118px; }
.bm span.fade { width: 112px; }
.w-apps { width: 65px; }
.w-ux { width: 98px; }
.w-grid { width: 102px; }
.w-std { width: 151px; }
.w-jq { width: 75px; }
.w-jqui { width: 89px; }
.w-maps { width: 140px; }
.other { margin-left: auto; margin-right: 10px; }

/* site navigation */
.navbar { height: 50px; flex: none; display: flex; justify-content: space-between; background: #333; }
.brand { margin-left: 82px; color: #fff; font-weight: 700; font-size: 21px; line-height: 50px; }
.toggle { width: 49px; padding: 0 0 2px 14px; border: 0; border-left: 1px solid #1c1c1c; background: none; display: flex; flex-direction: column; justify-content: center; gap: 6px; }
.toggle i { width: 20px; height: 2px; background: #fff; }

/* page */
.page { height: 828px; flex: none; background: #f7f8f3; border-radius: 0 0 3px 3px; padding-top: 73px; }
.actions { display: flex; gap: 137px; margin-left: 659px; }
.btn { width: 110px; height: 74px; padding: 0; border: 2px solid #000; border-radius: 8px; font: italic 700 29px "Liberation Serif", serif; letter-spacing: -1.5px; color: #000; -webkit-text-stroke: .4px #000; }
.ask { background: #74cbbf; }
.answer { background: #e68fd6; letter-spacing: -2.3px; }
.questions { list-style: none; width: 550px; height: 418px; margin: 88px auto 0 565px; padding: 0; overflow: hidden; border: 2px solid #000; border-radius: 45px; background: #e8e8e8; }
.questions li {
  height: 128px;
  padding-top: 24px;
  border-bottom: 2px solid #b8b8b8;
  text-align: center;
  white-space: nowrap;
  font: 500 26px/35px Lato, sans-serif;
  font-variant: small-caps;
  letter-spacing: 1.15px;
  color: #222;
  -webkit-text-stroke: .5px #222;
}
.questions .current { margin-top: -14px; background: #fcf82a; }
.questions .snug { letter-spacing: 1px; }
.questions .tight { letter-spacing: .55px; }
.questions .wide { letter-spacing: 1.65px; }
.questions .airy { letter-spacing: 2.4px; }

/* dock */
.dock { position: relative; height: 55px; flex: none; display: flex; background: #000; overflow: hidden; }
.shelf { position: absolute; left: 0; top: 0; }
.apps, .docs { position: relative; display: flex; height: 55px; padding-top: 6px; }
.apps { margin-left: 35.500px; width: 1361px; }
.docs { margin-left: 20px; width: 233px; }
.apps svg, .docs svg { flex: 1 1 0; min-width: 0; height: 40px; -webkit-box-reflect: below -6px linear-gradient(transparent 80%, rgba(0,0,0,.25)); }
.ic { font: 600 19px "Open Sans", sans-serif; letter-spacing: -.5px; }
.ic.tiny { font-size: 8px; }
.ic.sub { font-size: 20px; font-weight: 700; }
```
